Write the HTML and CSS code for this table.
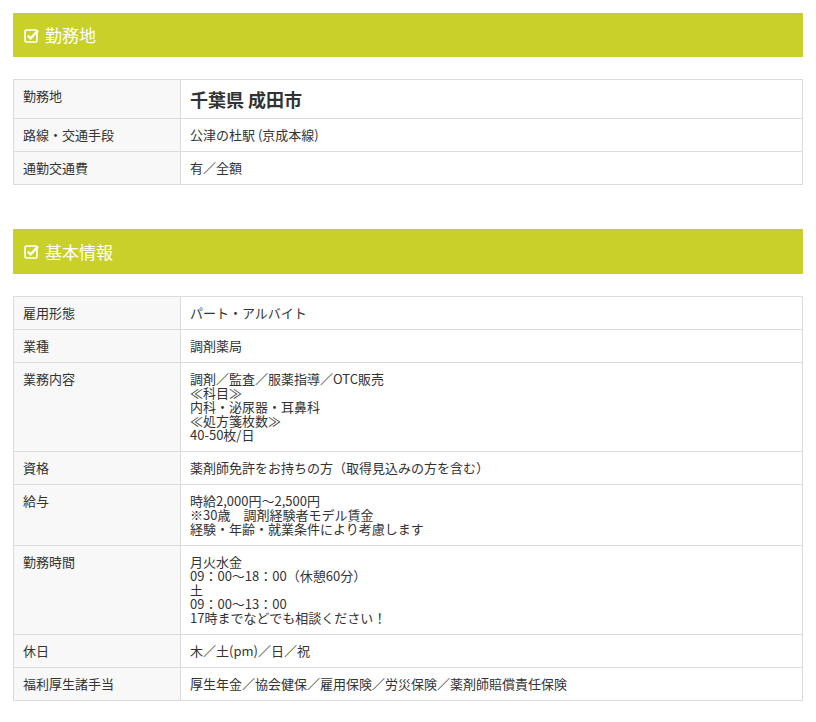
FILE: index.html
```html
<!DOCTYPE html>
<html lang="ja">
<head>
<meta charset="utf-8">
<link rel="stylesheet" href="styles.css">
</head>
<body>
<div class="page">
  <section class="section">
    <h2 class="bar"><svg class="chk" viewBox="0 0 15 15" width="15" height="15"><rect x="1" y="2" width="12" height="12" rx="1.5" fill="none" stroke="#fff" stroke-width="1.6"/><path d="M3.8 7.6 L6.6 10.3 L14 2.6" fill="none" stroke="#fff" stroke-width="2.4"/></svg>勤務地</h2>
    <table class="info">
      <tr><th>勤務地</th><td class="big">千葉県 成田市</td></tr>
      <tr><th>路線・交通手段</th><td>公津の杜駅 (京成本線)</td></tr>
      <tr><th>通勤交通費</th><td>有／全額</td></tr>
    </table>
  </section>
  <section class="section second">
    <h2 class="bar"><svg class="chk" viewBox="0 0 15 15" width="15" height="15"><rect x="1" y="2" width="12" height="12" rx="1.5" fill="none" stroke="#fff" stroke-width="1.6"/><path d="M3.8 7.6 L6.6 10.3 L14 2.6" fill="none" stroke="#fff" stroke-width="2.4"/></svg>基本情報</h2>
    <table class="info">
      <tr><th>雇用形態</th><td>パート・アルバイト</td></tr>
      <tr><th>業種</th><td>調剤薬局</td></tr>
      <tr><th>業務内容</th><td>調剤／監査／服薬指導／OTC販売<br>≪科目≫<br>内科・泌尿器・耳鼻科<br>≪処方箋枚数≫<br>40-50枚/日</td></tr>
      <tr><th>資格</th><td>薬剤師免許をお持ちの方（取得見込みの方を含む）</td></tr>
      <tr><th>給与</th><td>時給2,000円～2,500円<br>※30歳　調剤経験者モデル賃金<br>経験・年齢・就業条件により考慮します</td></tr>
      <tr><th>勤務時間</th><td>月火水金<br>09：00～18：00（休憩60分）<br>土<br>09：00～13：00<br>17時までなどでも相談ください！</td></tr>
      <tr><th>休日</th><td>木／土(pm)／日／祝</td></tr>
      <tr><th>福利厚生諸手当</th><td>厚生年金／協会健保／雇用保険／労災保険／薬剤師賠償責任保険</td></tr>
    </table>
  </section>
</div>
</body>
</html>
```
FILE: styles.css
```css
html, body {
  margin: 0;
  padding: 0;
  background: #fff;
}
body {
  font-family: "Noto Sans CJK JP", "Noto Sans", sans-serif;
  color: #333;
}
.page {
  padding: 13px 13px 0 13px;
  width: 790px;
}
.section.second {
  margin-top: 44px;
}
.bar {
  margin: 0;
  height: 44px;
  background: #c9d02a;
  color: #fff;
  font-size: 17px;
  font-weight: normal;
  line-height: 44px;
  display: flex;
  align-items: center;
  padding-left: 11px;
}
.second .bar {
  height: 45px;
}
.chk {
  margin-right: 6px;
  flex: none;
}
.info {
  margin-top: 22px;
  width: 790px;
  border-collapse: collapse;
  font-size: 13px;
  line-height: 14px;
}
.info th, .info td {
  border: 1px solid #dcdcdc;
  padding: 9px 10px 9px 9px;
  text-align: left;
  vertical-align: top;
  font-weight: normal;
}
.info th {
  width: 147px;
  background: #f8f8f8;
}
.info td.big {
  font-size: 18px;
  font-weight: bold;
  line-height: 20px;
}
```
